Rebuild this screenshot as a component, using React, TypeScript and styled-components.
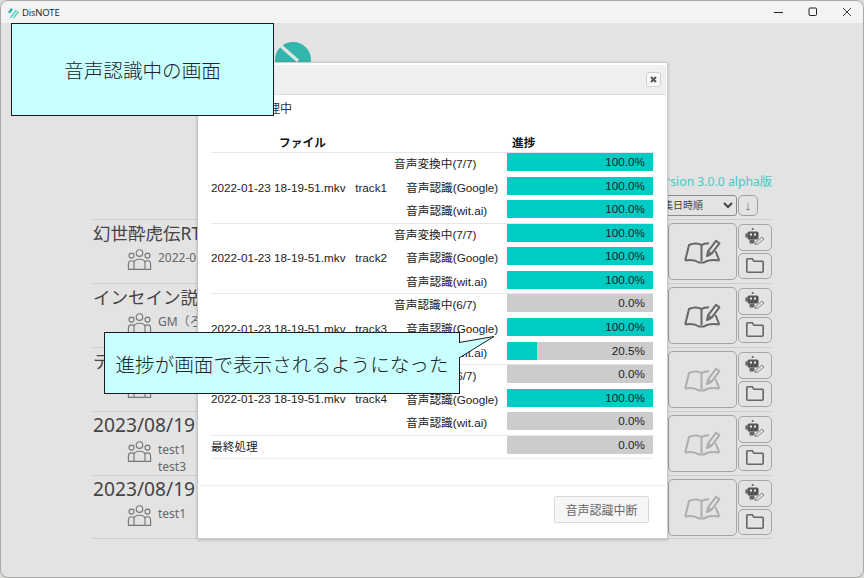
import React from "react";
import styled, { createGlobalStyle } from "styled-components";

const Global = createGlobalStyle`
  html, body { margin: 0; padding: 0; background: #dcdad4; }
  * { box-sizing: border-box; }
`;

const Win = styled.div`
  position: relative;
  width: 864px;
  height: 578px;
  overflow: hidden;
  border: 1px solid #a8a8a8;
  border-radius: 8px;
  background: #e3e3e3;
  font-family: "Liberation Sans", "Noto Sans CJK JP", sans-serif;
  display: flex;
  flex-direction: column;
`;
const TitleBar = styled.div`
  flex: none;
  height: 22px;
  background: #f3f3f3;
  display: flex;
  align-items: center;
  padding-left: 6px;
  font: 9.5px "Open Sans", sans-serif;
  letter-spacing: -0.2px;
  color: #222;
  gap: 2px;
`;
const TitleText = styled.span`
  flex: 1;
`;
const WinBtn = styled.div`
  width: 34px;
  height: 22px;
  display: flex;
  align-items: center;
  justify-content: center;
  svg { display: block; }
`;
const WinBtns = styled.div`
  display: flex;
  margin-right: -1px;
`;
const Page = styled.main`
  flex: 1;
  padding: 19px 91px 0 91px;
  display: flex;
  flex-direction: column;
`;
const Logo = styled.svg`
  display: block;
  margin-left: 183px;
  width: 36px;
  height: 36px;
`;
const Version = styled.div`
  margin-top: 95px;
  text-align: right;
  font: 12.2px/18px "Noto Sans", "Noto Sans CJK JP", sans-serif;
  color: #45c9c5;
`;
const SortBar = styled.div`
  display: flex;
  justify-content: flex-end;
  gap: 1px;
  margin-top: 4px;
  padding-right: 14px;
  height: 24px;
`;
const SortSelect = styled.select`
  width: 89px;
  height: 21px;
  border: 1px solid #8a8a8a;
  border-radius: 3px;
  background: #e3e3e3;
  color: #444;
  font: 10px "Liberation Sans", "Noto Sans CJK JP", sans-serif;
`;
const SortBtn = styled.button`
  width: 20px;
  height: 21px;
  padding: 0;
  border: 1px solid #a0a0a0;
  border-radius: 5px;
  background: #e3e3e3;
  color: #4a6a80;
  font: 13px "Liberation Sans", sans-serif;
`;
const Row = styled.div`
  height: 64px;
  border-top: 1px solid #cfcfcf;
  display: flex;
  &:last-child { border-bottom: 1px solid #cfcfcf; }
`;
const RowMain = styled.div`
  flex: 1;
  min-width: 0;
  padding-left: 1px;
`;
const RowTitle = styled.div<{ $date?: boolean }>`
  font-family: "Noto Sans", "Noto Sans CJK JP", sans-serif;
  font-size: ${(p) => (p.$date ? "19.2px" : "17.5px")};
  line-height: 26px;
  color: #444;
  white-space: nowrap;
`;
const Members = styled.div`
  display: flex;
  gap: 6px;
  padding: 3px 0 0 34px;
`;
const MemberList = styled.div`
  font: 12px/17px "Noto Sans", "Noto Sans CJK JP", sans-serif;
  color: #666;
  white-space: nowrap;
`;
const Actions = styled.div`
  flex: none;
  display: flex;
  gap: 1px;
  padding-top: 3px;
`;
const BigBtn = styled.div<{ $off?: boolean }>`
  width: 69px;
  height: 57px;
  border: 1px solid #a4a4a4;
  border-radius: 5px;
  display: flex;
  align-items: center;
  justify-content: center;
  color: ${(p) => (p.$off ? "#adadad" : "#666")};
`;
const SideBtns = styled.div`
  display: flex;
  flex-direction: column;
  gap: 2px;
  padding-top: 1px;
`;
const SmallBtn = styled.div`
  width: 34px;
  height: 26.5px;
  border: 1px solid #a4a4a4;
  border-radius: 5px;
  display: flex;
  align-items: center;
  justify-content: center;
  color: #666;
`;

const Modal = styled.section`
  position: absolute;
  left: 196px;
  top: 61px;
  width: 471px;
  height: 477px;
  background: #fff;
  border: 1px solid #ccc;
  border-left-color: #c4c4c4;
  box-shadow: 0 1px 3px rgba(0, 0, 0, 0.2);
  display: flex;
  flex-direction: column;
`;
const ModalHead = styled.header`
  flex: none;
  height: 30px;
  margin: 2px 1px 0;
  padding: 7px 5px 0 0;
  background: #efefef;
  border-bottom: 1px solid #dedede;
  border-radius: 3px 3px 0 0;
  display: flex;
  justify-content: flex-end;
`;
const CloseBtn = styled.div`
  width: 15px;
  height: 15px;
  border: 1px solid #d0d0d0;
  border-radius: 3px;
  background: #f8f8f8;
  display: flex;
  align-items: center;
  justify-content: center;
`;
const ModalBody = styled.div`
  flex: 1;
  padding: 6px 13px 0 10px;
`;
const Status = styled.div`
  font-size: 12px;
  line-height: 16px;
  color: #333;
`;
const Sheet = styled.div`
  margin: 17px 0 0 3px;
  width: 443px;
  font-size: 11.7px;
  color: #222;
`;
const HeadRow = styled.div`
  display: grid;
  grid-template-columns: 183px 113px 147px;
  height: 18.2px;
  font-weight: 700;
  line-height: 17px;
  color: #111;
`;
const HeadFile = styled.div`
  text-align: center;
`;
const HeadProgress = styled.div`
  grid-column: 3;
  padding-left: 5px;
`;
const Group = styled.div<{ $last?: boolean }>`
  display: grid;
  grid-template-columns: 183px 113px 147px;
  grid-auto-rows: 23.55px;
  box-shadow: inset 0 1px 0 #e6e6e6${(p) => (p.$last ? ", 0 1px 0 #ececec" : "")};
`;
const FileCell = styled.div<{ $span: number }>`
  grid-column: 1;
  grid-row: 1 / span ${(p) => p.$span};
  align-self: center;
  line-height: 16px;
  white-space: pre;
`;
const StepCell = styled.div<{ $indent: boolean }>`
  grid-column: 2;
  padding-left: ${(p) => (p.$indent ? "12px" : "0")};
  line-height: 23px;
  white-space: nowrap;
`;
const Bar = styled.div`
  grid-column: 3;
  position: relative;
  width: 146px;
  height: 18px;
  margin-top: 1px;
  background: #cccccc;
`;
const BarFill = styled.div`
  height: 100%;
  background: #00ccc4;
`;
const BarValue = styled.span`
  position: absolute;
  right: 8px;
  top: 0;
  line-height: 18px;
  color: #222;
`;
const ModalFoot = styled.footer`
  flex: none;
  height: 53px;
  margin: 0 2px;
  border-top: 1px solid #eee;
  padding: 10px 16px 0 0;
  display: flex;
  justify-content: flex-end;
  align-items: flex-start;
`;
const StopBtn = styled.button`
  width: 95px;
  height: 27px;
  padding: 0;
  border: 1px solid #dadada;
  border-radius: 2px;
  background: #f6f6f6;
  color: #666;
  font: 12px "Noto Sans CJK JP", sans-serif;
`;
const Note = styled.div`
  position: absolute;
  background: #c8ffff;
  border: 1px solid #1c1c1c;
  color: #222;
  font-family: "Noto Sans CJK JP", sans-serif;
  font-weight: 300;
  font-size: 19.6px;
  display: flex;
  align-items: center;
  justify-content: center;
  white-space: nowrap;
`;
const NoteTop = styled(Note)`
  left: 10px;
  top: 22px;
  width: 263px;
  height: 93px;
`;
const NoteProgress = styled(Note)`
  left: 103px;
  top: 331px;
  width: 356px;
  height: 62px;
`;
const Tail = styled.svg`
  position: absolute;
  left: 100%;
  top: 0;
  margin-left: -1px;
  width: 38px;
  height: 28px;
  overflow: visible;
`;

const AppIcon = () => (
  <svg width="13" height="13" viewBox="0 0 13 13">
    <path d="M1 6l3-4 2 1.6-3 4z" fill="#2fb4ae" />
    <path d="M3.5 11.5l6-7.5M6.5 12l5-6.5" stroke="#5fd0ca" strokeWidth="1.6" fill="none" />
  </svg>
);
const Users = () => (
  <svg width="25" height="21" viewBox="0 0 25 21" fill="none" stroke="#777" strokeWidth="1.15">
    <circle cx="12.5" cy="4" r="3.3" />
    <circle cx="4.5" cy="6.6" r="2.5" />
    <circle cx="20.5" cy="6.6" r="2.5" />
    <path d="M7 20.4v-6.2q0-4 5.5-4t5.5 4v6.2z" />
    <path d="M7 20.4H1.4v-5q0-3.6 3.1-3.6 1.7 0 3 1M18 20.4h5.6v-5q0-3.6-3.1-3.6-1.7 0-3 1" />
  </svg>
);
const Book = () => (
  <svg width="37" height="25" viewBox="0 0 37 25" fill="none" stroke="currentColor" strokeWidth="2" strokeLinejoin="round">
    <path d="M1.2 21.5 5 6Q12 3 17.5 6V22" />
    <path d="M17.5 6Q20 4.2 25 4.2M31.5 12l3.8 9.5" />
    <path d="M1.2 21.5Q10 20 15 23.5h5q5-3.5 15.3-2" />
    <path d="M23 17l1-4.6L32 1.8l3.4 2.5-8 10.6z" fill="#e3e3e3" />
    <path d="M24.2 12.8l3 2.1" />
  </svg>
);
const Robot = () => (
  <svg width="20" height="18" viewBox="0 0 20 18">
    <rect x="6.6" y="0" width="2" height="2" rx="1" fill="#555" />
    <rect x="2.5" y="3.5" width="11" height="8" rx="1.5" fill="#555" />
    <rect x="0.5" y="5.5" width="2" height="4" fill="#555" />
    <rect x="5" y="5.5" width="2" height="2" fill="#e8e8e8" />
    <rect x="9" y="5.5" width="2" height="2" fill="#e8e8e8" />
    <rect x="4.5" y="11.5" width="5" height="4" fill="#666" />
    <path d="M10 16.5l1-2.5 6-5 2 2-6 5z" fill="#e3e3e3" stroke="#888" strokeWidth="1" />
  </svg>
);
const Folder = () => (
  <svg width="18" height="15" viewBox="0 0 18 15" fill="none" stroke="currentColor" strokeWidth="1.6" strokeLinejoin="round">
    <path d="M.8 13V1.6Q.8.8 1.6.8h4.6L8 3.2h8.4q.8 0 .8.8v9q0 1.2-1.2 1.2H2Q.8 14.2.8 13z" />
  </svg>
);

const STEPS = ["音声変換中(7/7)", "音声認識(Google)", "音声認識(wit.ai)"];
const TRACKS = [
  { file: "2022-01-23 18-19-51.mkv   track1", steps: STEPS, values: [100, 100, 100] },
  { file: "2022-01-23 18-19-51.mkv   track2", steps: STEPS, values: [100, 100, 100] },
  { file: "2022-01-23 18-19-51.mkv   track3", steps: ["音声認識中(6/7)", STEPS[1], STEPS[2]], values: [0, 100, 20.5] },
  { file: "2022-01-23 18-19-51.mkv   track4", steps: ["音声認識中(6/7)", STEPS[1], STEPS[2]], values: [0, 100, 0] },
];
const ITEMS = [
  { title: "幻世酔虎伝RTA", members: ["2022-01-23"], off: false },
  { title: "インセイン説明", members: ["GM（ろ"], off: false },
  { title: "テスト", members: ["test1"], off: true },
  { title: "2023/08/19", date: true, members: ["test1", "test3"], off: true },
  { title: "2023/08/19", date: true, members: ["test1"], off: true },
];

const Progress = ({ value }: { value: number }) => (
  <Bar>
    <BarFill style={{ width: `${value}%` }} />
    <BarValue>{value.toFixed(1)}%</BarValue>
  </Bar>
);

export default function App() {
  return (
    <Win>
      <Global />
      <TitleBar>
        <AppIcon />
        <TitleText>DisNOTE</TitleText>
        <WinBtns>
          <WinBtn>
            <svg width="10" height="10" viewBox="0 0 10 10"><path d="M0 5.5h9" stroke="#222" strokeWidth="1" /></svg>
          </WinBtn>
          <WinBtn>
            <svg width="10" height="10" viewBox="0 0 10 10" fill="none"><rect x="1" y="1" width="7.5" height="7.5" rx="1" stroke="#222" /></svg>
          </WinBtn>
          <WinBtn>
            <svg width="10" height="10" viewBox="0 0 10 10"><path d="M1 1l8 8M9 1l-8 8" stroke="#222" strokeWidth="0.9" /></svg>
          </WinBtn>
        </WinBtns>
      </TitleBar>
      <Page>
        <Logo viewBox="0 0 36 36">
          <circle cx="18" cy="18" r="18" fill="#33b5ad" />
          <path d="M6 4l17 15" stroke="#e3e3e3" strokeWidth="3.4" />
        </Logo>
        <Version>version 3.0.0 alpha版</Version>
        <SortBar>
          <SortSelect defaultValue="edit">
            <option value="edit">編集日時順</option>
          </SortSelect>
          <SortBtn>↓</SortBtn>
        </SortBar>
        <div>
          {ITEMS.map((item, i) => (
            <Row key={i}>
              <RowMain>
                <RowTitle $date={item.date}>{item.title}</RowTitle>
                <Members>
                  <Users />
                  <MemberList>
                    {item.members.map((m) => (
                      <div key={m}>{m}</div>
                    ))}
                  </MemberList>
                </Members>
              </RowMain>
              <Actions>
                <BigBtn $off={item.off}><Book /></BigBtn>
                <SideBtns>
                  <SmallBtn><Robot /></SmallBtn>
                  <SmallBtn><Folder /></SmallBtn>
                </SideBtns>
              </Actions>
            </Row>
          ))}
        </div>
      </Page>
      <Modal>
        <ModalHead>
          <CloseBtn>
            <svg width="9" height="9" viewBox="0 0 9 9"><path d="M2 2l5 5M7 2L2 7" stroke="#555" strokeWidth="2" /></svg>
          </CloseBtn>
        </ModalHead>
        <ModalBody>
          <Status>音声認識処理中</Status>
          <Sheet>
            <HeadRow>
              <HeadFile>ファイル</HeadFile>
              <HeadProgress>進捗</HeadProgress>
            </HeadRow>
            {TRACKS.map((t) => (
              <Group key={t.file}>
                <FileCell $span={3}>{t.file}</FileCell>
                {t.steps.map((s, i) => (
                  <React.Fragment key={i}>
                    <StepCell $indent={i > 0}>{s}</StepCell>
                    <Progress value={t.values[i]} />
                  </React.Fragment>
                ))}
              </Group>
            ))}
            <Group $last>
              <FileCell $span={1}>最終処理</FileCell>
              <Progress value={0} />
            </Group>
          </Sheet>
        </ModalBody>
        <ModalFoot>
          <StopBtn>音声認識中断</StopBtn>
        </ModalFoot>
      </Modal>
      <NoteTop>音声認識中の画面</NoteTop>
      <NoteProgress>
        進捗が画面で表示されるようになった
        <Tail viewBox="0 0 38 28">
          <path d="M1 9.5L36 3.5 1 25" fill="#c8ffff" stroke="#1c1c1c" strokeWidth="1" />
        </Tail>
      </NoteProgress>
    </Win>
  );
}
